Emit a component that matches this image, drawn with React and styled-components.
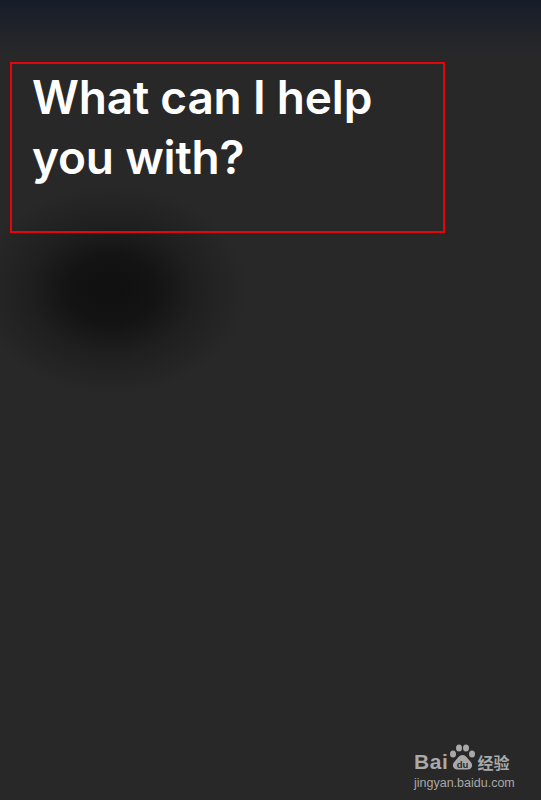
import styled, { createGlobalStyle } from "styled-components"

const Global = createGlobalStyle`
  html, body {
    margin: 0;
    padding: 0;
    background: #282828;
  }
`

const Screen = styled.div`
  position: relative;
  width: 541px;
  height: 800px;
  overflow: hidden;
  background:
    radial-gradient(ellipse 135px 105px at 112px 290px, rgba(16, 16, 16, 1) 0%, rgba(17, 17, 17, 0.9) 32%, rgba(24, 24, 24, 0.55) 62%, rgba(40, 40, 40, 0) 100%),
    linear-gradient(to bottom, #171d29 0px, #1d2129 22px, #252629 42px, #282828 60px, #282828 100%);
  font-family: Inter, "Noto Sans", sans-serif;
  padding-top: 62px;
  box-sizing: border-box;
`

const Highlight = styled.div`
  margin-left: 10px;
  width: 435px;
  height: 171px;
  box-sizing: border-box;
  border: 2px solid #e5050b;
  padding: 3px 0 0 20px;
`

const Prompt = styled.h1`
  margin: 0;
  color: #ffffff;
  font-size: 46px;
  font-weight: 600;
  line-height: 60px;
  letter-spacing: -0.2px;
`

const Watermark = styled.div`
  position: absolute;
  left: 414px;
  bottom: 9px;
  width: 98px;
  display: flex;
  flex-direction: column;
  align-items: flex-start;
  color: #a9a9a9;
`

const Brand = styled.div`
  display: flex;
  align-items: flex-end;
`

const BrandText = styled.span`
  font-family: "Liberation Sans", Arial, sans-serif;
  font-weight: 700;
  font-size: 21px;
  line-height: 18px;
  letter-spacing: 0.6px;
`

const CjkText = styled.span`
  font-family: "Noto Sans CJK SC", sans-serif;
  font-weight: 700;
  font-size: 16px;
  line-height: 18px;
`

const Url = styled.span`
  font-family: "Liberation Sans", Arial, sans-serif;
  font-size: 12.5px;
  line-height: 16px;
  margin-top: 4px;
`

const Paw = () => (
  <svg width="29" height="27" viewBox="0 0 28 27">
    <g fill="#a9a9a9">
      <ellipse cx="4.5" cy="10" rx="3" ry="3.6" />
      <ellipse cx="10.5" cy="4" rx="3" ry="3.6" />
      <ellipse cx="17.5" cy="4" rx="3" ry="3.6" />
      <ellipse cx="23.5" cy="10" rx="3" ry="3.6" />
      <path d="M14 11c-3.5 0-4.8 3.2-7 5.5-2.3 2.3-3.5 4.5-1.8 7.2 1.8 2.5 5.3 1.8 8.8 1.8s7 .7 8.8-1.8c1.7-2.7.5-4.9-1.8-7.2C18.8 14.2 17.5 11 14 11z" />
    </g>
    <text x="14" y="23.5" textAnchor="middle" fontSize="9.5" fontWeight="700" fontFamily="Liberation Sans, Arial, sans-serif" fill="#282828">du</text>
  </svg>
)

export default function App() {
  return (
    <>
      <Global />
      <Screen>
        <Highlight>
          <Prompt>
            What can I help
            <br />
            you with?
          </Prompt>
        </Highlight>
        <Watermark>
          <Brand>
            <BrandText>Bai</BrandText>
            <Paw />
            <CjkText>经验</CjkText>
          </Brand>
          <Url>jingyan.baidu.com</Url>
        </Watermark>
      </Screen>
    </>
  )
}
